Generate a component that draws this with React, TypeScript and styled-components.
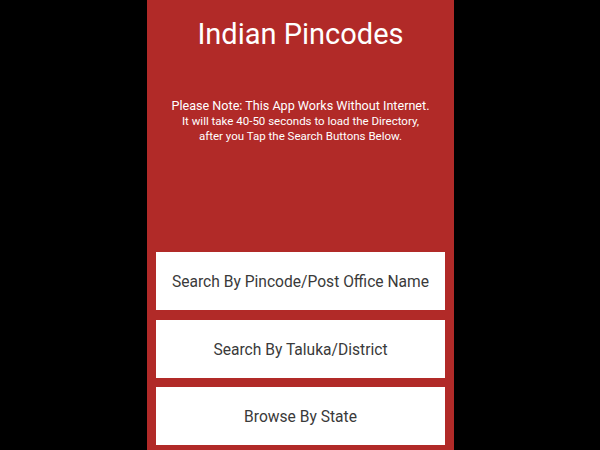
import * as React from 'react';
import styled, { createGlobalStyle } from 'styled-components';

const GlobalStyle = createGlobalStyle`
  html, body {
    margin: 0;
    padding: 0;
    background: #000;
  }
  body {
    font-family: Roboto, "Liberation Sans", sans-serif;
  }
`;

const Stage = styled.div`
  width: 600px;
  height: 450px;
  background: #000;
  display: flex;
  justify-content: center;
  overflow: hidden;
`;

const Screen = styled.div`
  width: 307px;
  height: 450px;
  margin-left: 1px;
  background: #b12a28;
  display: flex;
  flex-direction: column;
  align-items: center;
  color: #fff;
`;

const Title = styled.h1`
  margin: 17px 0 0;
  font-size: 29px;
  font-weight: 400;
  line-height: normal;
  text-align: center;
`;

const Note = styled.div`
  margin-top: 46px;
  text-align: center;
`;

const NoteHead = styled.div`
  font-size: 12.6px;
  line-height: 17px;
`;

const NoteBody = styled.div`
  font-size: 11.5px;
  line-height: 15px;
`;

const Buttons = styled.div`
  margin-top: auto;
  width: 100%;
  box-sizing: border-box;
  padding: 0 9px 5px;
  display: flex;
  flex-direction: column;
  gap: 9.5px;
`;

const MenuButton = styled.button`
  height: 58px;
  width: 100%;
  border: none;
  background: #fff;
  color: #3a3a3a;
  font-family: Roboto, "Liberation Sans", sans-serif;
  font-size: 15.6px;
  padding: 0;
  padding-top: 2px;
  cursor: pointer;
`;

const items = [
  'Search By Pincode/Post Office Name',
  'Search By Taluka/District',
  'Browse By State',
];

export default function App() {
  return (
    <Stage>
      <GlobalStyle />
      <Screen>
        <Title>Indian Pincodes</Title>
        <Note>
          <NoteHead>Please Note: This App Works Without Internet.</NoteHead>
          <NoteBody>
            It will take 40-50 seconds to load the Directory,
            <br />
            after you Tap the Search Buttons Below.
          </NoteBody>
        </Note>
        <Buttons>
          {items.map((label) => (
            <MenuButton key={label}>{label}</MenuButton>
          ))}
        </Buttons>
      </Screen>
    </Stage>
  );
}
